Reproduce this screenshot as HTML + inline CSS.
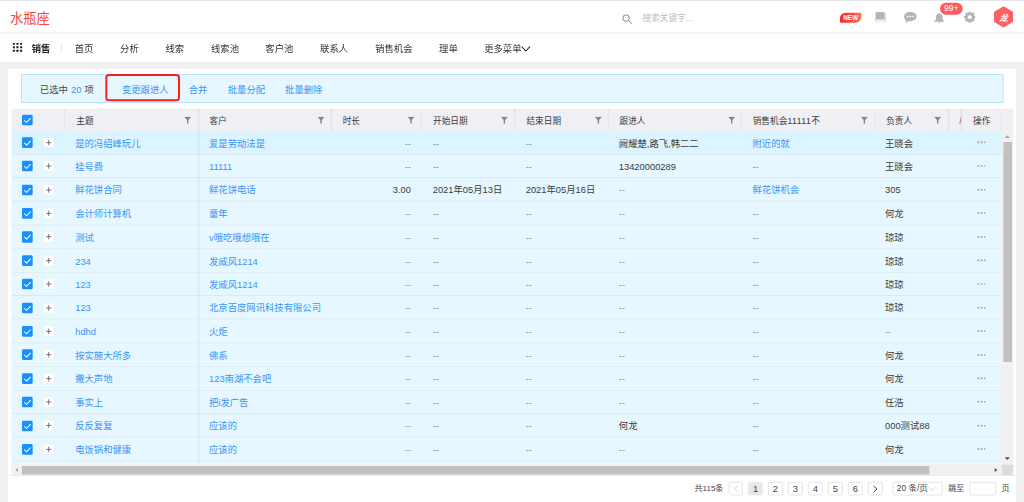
<!DOCTYPE html>
<html lang="zh-CN"><head><meta charset="utf-8"><title>水瓶座</title>
<style>
*{box-sizing:border-box;margin:0;padding:0}
html,body{width:1024px;height:502px;overflow:hidden;margin:0}#s{position:absolute;left:0;top:0;width:1536px;height:753px;transform:scale(.666667);transform-origin:0 0}
body{position:relative;background:#f0f0f0;font-family:"Liberation Sans","Noto Sans CJK SC",sans-serif;font-size:14px;color:#333;-webkit-font-smoothing:antialiased}
i{font-style:normal;display:block}
.abs{position:absolute}
/* top header */
.hd{position:absolute;left:0;top:0;width:1536px;height:50.25px;background:#fff;border-bottom:1.5px solid #ececec;box-shadow:inset 0 -4.5px 4.5px -3px rgba(0,0,0,.035),inset 0 1.5px 0 #e6e7ea}
.logo{position:absolute;left:15px;top:13.5px;font-size:19.95px;line-height:27px;color:#f4483c;letter-spacing:0;white-space:nowrap}
.srch{position:absolute;left:933px;top:21px;width:15.3px;height:15.3px}
.ph{position:absolute;left:963.75px;top:17.55px;font-size:13px;line-height:18px;color:#bdbdbd;white-space:nowrap}
.new{position:absolute;left:1260px;top:19.2px;width:31.8px;height:15px;border-radius:8.25px 1.5px 8.25px 1.5px;background:linear-gradient(100deg,#f5222d 0%,#ff4a3d 55%,#ff7a5c 100%);color:#fff;font-size:9.45px;line-height:15px;font-weight:bold;text-align:center;letter-spacing:0}
.new i{font-style:italic;display:inline}
.ic{position:absolute}
.bdg{position:absolute;left:1409.7px;top:4.05px;width:34.8px;height:17.7px;border-radius:9px;background:#fd5c5f;color:#fff;font-size:12.9px;line-height:17.7px;text-align:center;white-space:nowrap}
.ava{position:absolute;left:1491px;top:9px;width:28.8px;height:32.7px}
/* nav */
.nav{position:absolute;left:0;top:51px;width:1536px;height:42px;background:#fff}
.nav span{position:absolute;top:12px;line-height:21px;font-size:14px;color:#333;white-space:nowrap}
.nav .cur{font-weight:bold;color:#222}
.grid{position:absolute;left:19.2px;top:13.05px;width:14.4px;height:13.8px}
.vsep{position:absolute;left:91.5px;top:13.05px;width:1.5px;height:13.8px;background:#dcdcdc}
/* card */
.card{position:absolute;left:12px;top:102.9px;width:1512px;height:660px;background:#fff}
.bl{position:absolute;left:12px;top:712.95px;width:1512px;height:1px;background:#e8e8e8}
.alert{position:absolute;left:31.5px;top:111.3px;width:1473px;height:42.9px;background:#e6f7ff;border:1px solid #9fd9fd}
.alert span{position:absolute;top:11.7px;line-height:21px;white-space:nowrap;color:#454545;word-spacing:0.75px}
.alert .lk{color:#3896f8}
.redbox{position:absolute;left:158.4px;top:111.3px;width:111.3px;height:40.5px;border:3.15px solid #ff1c1c;border-radius:5.25px}
/* table */
.thead{position:absolute;left:16.5px;top:163.2px;width:1503px;height:33.15px;background:#f0f0f4}
.thead span{position:absolute;top:8.85px;line-height:19.5px;font-size:13px;color:#3a3a3a;font-weight:400;white-space:nowrap}
.thead u{position:absolute;top:0;margin-left:-0.6px;width:1.5px;height:33.15px;background:#e0e0e5;text-decoration:none}
.thead svg.f{position:absolute;top:11.7px;width:11.1px;height:11.1px;margin-left:-0.75px}
.tbody{position:absolute;left:16.5px;top:196.35px;width:1486.5px;height:500.7px;overflow:hidden;background:#e6f7ff}
.tr{position:absolute;left:0;width:1486.5px;height:35.38px;border-bottom:1.5px solid #d8e3ea;background:#e6f7ff}
.tr.hov{background:#dcf4ff}
.tbody:after{content:"";position:absolute;left:280.95px;top:0;width:1.5px;height:100%;background:rgba(120,160,190,.13)}
.cb{position:absolute;left:16.5px;top:9.6px;width:16.05px;height:16.05px;border-radius:2.1px;background:#1890ff}
.cb svg{display:block;width:100%;height:100%;fill:none;stroke:#fff;stroke-width:1.5;stroke-linecap:round;stroke-linejoin:round}
.ex{position:absolute;left:49.8px;top:10.5px;width:14.1px;height:14.1px;background:#fff}
.ex svg{display:block;width:100%;height:100%}
.c{position:absolute;top:8.25px;line-height:21px;white-space:nowrap;color:#3c3c3c}
.lk{color:#3896f8}
.m{color:#8a8f94}
.c1{left:96.3px}.c2{left:297px}.c3{right:886.5px;text-align:right}.c4{left:632.55px}.c5{left:772.05px}.c6{left:911.7px}.c7{left:1112.25px}.c8{left:1311px}
.c9{left:1448.85px;top:15.9px;width:15px;height:3px}
.c9 b{position:absolute;top:0;width:2.85px;height:2.85px;border-radius:50%;background:#a6a6a6}
.c9 b:nth-child(1){left:0.6px}.c9 b:nth-child(2){left:5.4px}.c9 b:nth-child(3){left:10.2px}
/* scrollbars */
.vs{position:absolute;left:1503px;top:196.35px;width:16.5px;height:500.7px;background:#f1f1f1}
.vs .th{position:absolute;left:1.8px;top:17.1px;width:12.9px;height:329.4px;background:#c1c1c1}
.hs{position:absolute;left:16.5px;top:697.05px;width:1486.5px;height:15.9px;background:#f1f1f1}
.hs .th{position:absolute;left:16.95px;top:2.1px;width:1360.8px;height:12.45px;background:#c1c1c1}
.cor{position:absolute;left:1503px;top:697.05px;width:16.5px;height:15.9px;background:#dcdcdc}
.arr{position:absolute;width:0;height:0;border:0 solid transparent}
/* pagination */
.pg{position:absolute;top:724.05px;height:19.95px;font-size:12px;line-height:19.95px;color:#444;white-space:nowrap}
.pb{position:absolute;top:723.45px;width:21.75px;height:19.8px;border:1.05px solid #d9d9d9;border-radius:2.4px;background:#fff;font-size:14px;line-height:18.9px;text-align:center;color:#444}
.pb.on{background:#e8e8e8;border-color:#e8e8e8}

</style></head>
<body>
<div id="s">
<div class="hd">
<div class="logo">水瓶座</div>
<svg class="srch" viewBox="0 0 11 11"><circle cx="4.4" cy="4.4" r="3.5" fill="none" stroke="#7a7a7a" stroke-width=".95"/><path d="M7 7l3.3 3.3" stroke="#7a7a7a" stroke-width="1.05" stroke-linecap="round"/></svg>
<div class="ph">搜索关键字...</div>
<div class="new">NEW</div>
<svg class="ic" style="left:1313.4px;top:17.85px;width:15.9px;height:16.2px" viewBox="0 0 106 108"><path d="M16 4h78c7 0 12 5 12 12v76c0 7-5 12-12 12H16z" fill="#d6d8df"/><path d="M14 0h66c6 0 10 4 10 10v64H0V14C0 6 6 0 14 0z" fill="#b1b4bd"/><path d="M0 70h12v36C5 104 0 98 0 90z" fill="#b1b4bd"/><path d="M22 76h64c4 0 7 3 7 7v10c0 4-3 7-7 7H22c-7 0-12-5-12-12s5-12 12-12z" fill="#fff"/><path d="M26 85h54v6H26z" fill="#b1b4bd"/></svg>
<svg class="ic" style="left:1355.7px;top:17.55px;width:19.2px;height:16.8px" viewBox="0 0 128 112"><path d="M64 0c35 0 64 20 64 46S99 92 64 92c-8 0-16-1-23-3-6 8-16 17-26 22 3-8 4-19 3-28C7 75 0 61 0 46 0 20 29 0 64 0z" fill="#b1b4bd"/><rect x="27" y="38" width="16" height="14" rx="3" fill="#fff"/><rect x="56" y="38" width="16" height="14" rx="3" fill="#fff"/><rect x="85" y="38" width="16" height="14" rx="3" fill="#fff"/></svg>
<svg class="ic" style="left:1401px;top:18.6px;width:15.9px;height:16.2px" viewBox="0 0 106 108"><path d="M53 0c5 0 8 3 8 8v3c16 4 26 18 26 36v20c0 8 8 14 19 19v4H0v-4c11-5 19-11 19-19V47c0-18 10-32 26-36V8c0-5 3-8 8-8z" fill="#b1b4bd"/><path d="M41 96h24c0 7-5 12-12 12s-12-5-12-12z" fill="#b1b4bd"/></svg>
<div class="bdg">99+</div>
<svg class="ic" style="left:1445.7px;top:17.4px;width:17.4px;height:17.4px" viewBox="-58 -58 116 116"><g fill="#b1b4bd"><circle r="45"/><rect x="-14" y="-57" width="28" height="28" rx="6" transform="rotate(0)"/><rect x="-14" y="-57" width="28" height="28" rx="6" transform="rotate(45)"/><rect x="-14" y="-57" width="28" height="28" rx="6" transform="rotate(90)"/><rect x="-14" y="-57" width="28" height="28" rx="6" transform="rotate(135)"/><rect x="-14" y="-57" width="28" height="28" rx="6" transform="rotate(180)"/><rect x="-14" y="-57" width="28" height="28" rx="6" transform="rotate(225)"/><rect x="-14" y="-57" width="28" height="28" rx="6" transform="rotate(270)"/><rect x="-14" y="-57" width="28" height="28" rx="6" transform="rotate(315)"/></g><circle r="19" fill="#fff"/></svg>
<svg class="ava" viewBox="0 0 192 218"><path d="M96 3L186 55c4 2 6 6 6 10v88c0 4-2 8-6 10L96 215 6 163c-4-2-6-6-6-10V65c0-4 2-8 6-10z" fill="#fd6164"/><text x="96" y="150" font-family="Liberation Sans,Noto Sans CJK SC,sans-serif" font-size="86" font-weight="bold" font-style="italic" fill="#fff" text-anchor="middle">龙</text></svg>
</div>
<div class="nav">
<svg class="grid" viewBox="0 0 96 92"><g fill="#222"><rect x="0" y="0" width="22" height="20" rx="3"/><rect x="37" y="0" width="22" height="20" rx="3"/><rect x="74" y="0" width="22" height="20" rx="3"/><rect x="0" y="36" width="22" height="20" rx="3"/><rect x="37" y="36" width="22" height="20" rx="3"/><rect x="74" y="36" width="22" height="20" rx="3"/><rect x="0" y="72" width="22" height="20" rx="3"/><rect x="37" y="72" width="22" height="20" rx="3"/><rect x="74" y="72" width="22" height="20" rx="3"/></g></svg>
<span class="cur" style="left:47.7px">销售</span>
<i class="vsep"></i>
<span style="left:112.05px">首页</span>
<span style="left:180.15px">分析</span>
<span style="left:248.25px">线索</span>
<span style="left:316.5px">线索池</span>
<span style="left:397.95px">客户池</span>
<span style="left:480.15px">联系人</span>
<span style="left:562.8px">销售机会</span>
<span style="left:658.65px">理单</span>
<span style="left:726.3px">更多菜单</span>
<svg class="abs" style="left:782.4px;top:17.7px;width:13.5px;height:9px" viewBox="0 0 90 60"><path d="M6 8l39 42L84 8" fill="none" stroke="#222" stroke-width="10" stroke-linecap="round" stroke-linejoin="round"/></svg>
</div>
<div class="card"></div>
<div class="alert">
<span style="left:27.3px">已选中 <span class="lk" style="position:static">20</span> 项</span>
<span class="lk" style="left:150.45px">变更跟进人</span>
<span class="lk" style="left:250.65px">合并</span>
<span class="lk" style="left:309.15px">批量分配</span>
<span class="lk" style="left:395.1px">批量删除</span>
</div>
<div class="redbox"></div>
<div class="thead">
<i class="cb" style="top:8.4px"><svg viewBox="0 0 16 16"><path d="M3.9 8.8l3 2.9 5.6-6.1"/></svg></i>
<u style="left:79.95px"></u><u style="left:281.4px"></u><u style="left:480.45px"></u><u style="left:615.6px"></u><u style="left:755.1px"></u><u style="left:895.8px"></u><u style="left:1095.6px"></u><u style="left:1295.85px"></u><u style="left:1406.1px"></u><u style="left:1425.3px"></u><u style="left:1485px"></u>
<span style="left:97.95px">主题</span>
<span style="left:297.6px">客户</span>
<span style="left:497.55px">时长</span>
<span style="left:633px">开始日期</span>
<span style="left:773.1px">结束日期</span>
<span style="left:912.75px">跟进人</span>
<span style="left:1112.55px">销售机会<b style="font-weight:inherit;letter-spacing:0.68px">11111</b>不</span>
<span style="left:1312.8px">负责人</span>
<span style="left:1422.3px;width:3px;overflow:hidden;color:#555">/</span>
<span style="left:1443px">操作</span>
<svg class="f" style="left:260.25px" viewBox="0 0 69 74"><path d="M2 0h65c2 0 3 2 1 4L42 34v34c0 3-2 5-4 4l-9-5c-1-1-2-2-2-4V34L1 4C-1 2 0 0 2 0z" fill="#858585"/></svg><svg class="f" style="left:460.5px" viewBox="0 0 69 74"><path d="M2 0h65c2 0 3 2 1 4L42 34v34c0 3-2 5-4 4l-9-5c-1-1-2-2-2-4V34L1 4C-1 2 0 0 2 0z" fill="#858585"/></svg><svg class="f" style="left:595.5px" viewBox="0 0 69 74"><path d="M2 0h65c2 0 3 2 1 4L42 34v34c0 3-2 5-4 4l-9-5c-1-1-2-2-2-4V34L1 4C-1 2 0 0 2 0z" fill="#858585"/></svg><svg class="f" style="left:735px" viewBox="0 0 69 74"><path d="M2 0h65c2 0 3 2 1 4L42 34v34c0 3-2 5-4 4l-9-5c-1-1-2-2-2-4V34L1 4C-1 2 0 0 2 0z" fill="#858585"/></svg><svg class="f" style="left:876px" viewBox="0 0 69 74"><path d="M2 0h65c2 0 3 2 1 4L42 34v34c0 3-2 5-4 4l-9-5c-1-1-2-2-2-4V34L1 4C-1 2 0 0 2 0z" fill="#858585"/></svg><svg class="f" style="left:1075.95px" viewBox="0 0 69 74"><path d="M2 0h65c2 0 3 2 1 4L42 34v34c0 3-2 5-4 4l-9-5c-1-1-2-2-2-4V34L1 4C-1 2 0 0 2 0z" fill="#858585"/></svg><svg class="f" style="left:1275.45px" viewBox="0 0 69 74"><path d="M2 0h65c2 0 3 2 1 4L42 34v34c0 3-2 5-4 4l-9-5c-1-1-2-2-2-4V34L1 4C-1 2 0 0 2 0z" fill="#858585"/></svg><svg class="f" style="left:1385.7px" viewBox="0 0 69 74"><path d="M2 0h65c2 0 3 2 1 4L42 34v34c0 3-2 5-4 4l-9-5c-1-1-2-2-2-4V34L1 4C-1 2 0 0 2 0z" fill="#858585"/></svg>
</div>
<div class="tbody">
<div class="tr hov" style="top:0px"><i class="cb"><svg viewBox="0 0 16 16"><path d="M3.9 8.8l3 2.9 5.6-6.1"/></svg></i><i class="ex"><svg viewBox="0 0 14 14"><path d="M3 7h8M7 3v8" stroke="#555" stroke-width="1.15" fill="none"/></svg></i><span class="c c1 lk">是的冯绍峰玩儿</span><span class="c c2 lk">爱是劳动法是</span><span class="c c3 m">--</span><span class="c c4 m">--</span><span class="c c5 m">--</span><span class="c c6">阙耀楚,路飞,韩二二</span><span class="c c7 lk">附近的就</span><span class="c c8">王晓会</span><span class="c c9"><b></b><b></b><b></b></span></div>
<div class="tr" style="top:35.38px"><i class="cb"><svg viewBox="0 0 16 16"><path d="M3.9 8.8l3 2.9 5.6-6.1"/></svg></i><i class="ex"><svg viewBox="0 0 14 14"><path d="M3 7h8M7 3v8" stroke="#555" stroke-width="1.15" fill="none"/></svg></i><span class="c c1 lk">挂号费</span><span class="c c2 lk">11111</span><span class="c c3 m">--</span><span class="c c4 m">--</span><span class="c c5 m">--</span><span class="c c6">13420000289</span><span class="c c7 m">--</span><span class="c c8">王晓会</span><span class="c c9"><b></b><b></b><b></b></span></div>
<div class="tr" style="top:70.77px"><i class="cb"><svg viewBox="0 0 16 16"><path d="M3.9 8.8l3 2.9 5.6-6.1"/></svg></i><i class="ex"><svg viewBox="0 0 14 14"><path d="M3 7h8M7 3v8" stroke="#555" stroke-width="1.15" fill="none"/></svg></i><span class="c c1 lk">鲜花饼合同</span><span class="c c2 lk">鲜花饼电话</span><span class="c c3">3.00</span><span class="c c4">2021年05月13日</span><span class="c c5">2021年05月16日</span><span class="c c6 m">--</span><span class="c c7 lk">鲜花饼机会</span><span class="c c8">305</span><span class="c c9"><b></b><b></b><b></b></span></div>
<div class="tr" style="top:106.16px"><i class="cb"><svg viewBox="0 0 16 16"><path d="M3.9 8.8l3 2.9 5.6-6.1"/></svg></i><i class="ex"><svg viewBox="0 0 14 14"><path d="M3 7h8M7 3v8" stroke="#555" stroke-width="1.15" fill="none"/></svg></i><span class="c c1 lk">会计师计算机</span><span class="c c2 lk">童年</span><span class="c c3 m">--</span><span class="c c4 m">--</span><span class="c c5 m">--</span><span class="c c6 m">--</span><span class="c c7 m">--</span><span class="c c8">何龙</span><span class="c c9"><b></b><b></b><b></b></span></div>
<div class="tr" style="top:141.54px"><i class="cb"><svg viewBox="0 0 16 16"><path d="M3.9 8.8l3 2.9 5.6-6.1"/></svg></i><i class="ex"><svg viewBox="0 0 14 14"><path d="M3 7h8M7 3v8" stroke="#555" stroke-width="1.15" fill="none"/></svg></i><span class="c c1 lk">测试</span><span class="c c2 lk">v哦吃哦想哦在</span><span class="c c3 m">--</span><span class="c c4 m">--</span><span class="c c5 m">--</span><span class="c c6 m">--</span><span class="c c7 m">--</span><span class="c c8">琼琼</span><span class="c c9"><b></b><b></b><b></b></span></div>
<div class="tr" style="top:176.93px"><i class="cb"><svg viewBox="0 0 16 16"><path d="M3.9 8.8l3 2.9 5.6-6.1"/></svg></i><i class="ex"><svg viewBox="0 0 14 14"><path d="M3 7h8M7 3v8" stroke="#555" stroke-width="1.15" fill="none"/></svg></i><span class="c c1 lk">234</span><span class="c c2 lk">发威风1214</span><span class="c c3 m">--</span><span class="c c4 m">--</span><span class="c c5 m">--</span><span class="c c6 m">--</span><span class="c c7 m">--</span><span class="c c8">琼琼</span><span class="c c9"><b></b><b></b><b></b></span></div>
<div class="tr" style="top:212.31px"><i class="cb"><svg viewBox="0 0 16 16"><path d="M3.9 8.8l3 2.9 5.6-6.1"/></svg></i><i class="ex"><svg viewBox="0 0 14 14"><path d="M3 7h8M7 3v8" stroke="#555" stroke-width="1.15" fill="none"/></svg></i><span class="c c1 lk">123</span><span class="c c2 lk">发威风1214</span><span class="c c3 m">--</span><span class="c c4 m">--</span><span class="c c5 m">--</span><span class="c c6 m">--</span><span class="c c7 m">--</span><span class="c c8">琼琼</span><span class="c c9"><b></b><b></b><b></b></span></div>
<div class="tr" style="top:247.69px"><i class="cb"><svg viewBox="0 0 16 16"><path d="M3.9 8.8l3 2.9 5.6-6.1"/></svg></i><i class="ex"><svg viewBox="0 0 14 14"><path d="M3 7h8M7 3v8" stroke="#555" stroke-width="1.15" fill="none"/></svg></i><span class="c c1 lk">123</span><span class="c c2 lk">北京百度网讯科技有限公司</span><span class="c c3 m">--</span><span class="c c4 m">--</span><span class="c c5 m">--</span><span class="c c6 m">--</span><span class="c c7 m">--</span><span class="c c8">琼琼</span><span class="c c9"><b></b><b></b><b></b></span></div>
<div class="tr" style="top:283.08px"><i class="cb"><svg viewBox="0 0 16 16"><path d="M3.9 8.8l3 2.9 5.6-6.1"/></svg></i><i class="ex"><svg viewBox="0 0 14 14"><path d="M3 7h8M7 3v8" stroke="#555" stroke-width="1.15" fill="none"/></svg></i><span class="c c1 lk">hdhd</span><span class="c c2 lk">火炬</span><span class="c c3 m">--</span><span class="c c4 m">--</span><span class="c c5 m">--</span><span class="c c6 m">--</span><span class="c c7 m">--</span><span class="c c8 m">--</span><span class="c c9"><b></b><b></b><b></b></span></div>
<div class="tr" style="top:318.47px"><i class="cb"><svg viewBox="0 0 16 16"><path d="M3.9 8.8l3 2.9 5.6-6.1"/></svg></i><i class="ex"><svg viewBox="0 0 14 14"><path d="M3 7h8M7 3v8" stroke="#555" stroke-width="1.15" fill="none"/></svg></i><span class="c c1 lk">按实施大所多</span><span class="c c2 lk">佛系</span><span class="c c3 m">--</span><span class="c c4 m">--</span><span class="c c5 m">--</span><span class="c c6 m">--</span><span class="c c7 m">--</span><span class="c c8">何龙</span><span class="c c9"><b></b><b></b><b></b></span></div>
<div class="tr" style="top:353.85px"><i class="cb"><svg viewBox="0 0 16 16"><path d="M3.9 8.8l3 2.9 5.6-6.1"/></svg></i><i class="ex"><svg viewBox="0 0 14 14"><path d="M3 7h8M7 3v8" stroke="#555" stroke-width="1.15" fill="none"/></svg></i><span class="c c1 lk">撒大声地</span><span class="c c2 lk">123南湖不会吧</span><span class="c c3 m">--</span><span class="c c4 m">--</span><span class="c c5 m">--</span><span class="c c6 m">--</span><span class="c c7 m">--</span><span class="c c8">何龙</span><span class="c c9"><b></b><b></b><b></b></span></div>
<div class="tr" style="top:389.24px"><i class="cb"><svg viewBox="0 0 16 16"><path d="M3.9 8.8l3 2.9 5.6-6.1"/></svg></i><i class="ex"><svg viewBox="0 0 14 14"><path d="M3 7h8M7 3v8" stroke="#555" stroke-width="1.15" fill="none"/></svg></i><span class="c c1 lk">事实上</span><span class="c c2 lk">把i发广告</span><span class="c c3 m">--</span><span class="c c4 m">--</span><span class="c c5 m">--</span><span class="c c6 m">--</span><span class="c c7 m">--</span><span class="c c8">任浩</span><span class="c c9"><b></b><b></b><b></b></span></div>
<div class="tr" style="top:424.62px"><i class="cb"><svg viewBox="0 0 16 16"><path d="M3.9 8.8l3 2.9 5.6-6.1"/></svg></i><i class="ex"><svg viewBox="0 0 14 14"><path d="M3 7h8M7 3v8" stroke="#555" stroke-width="1.15" fill="none"/></svg></i><span class="c c1 lk">反反复复</span><span class="c c2 lk">应该的</span><span class="c c3 m">--</span><span class="c c4 m">--</span><span class="c c5 m">--</span><span class="c c6">何龙</span><span class="c c7 m">--</span><span class="c c8">000测试88</span><span class="c c9"><b></b><b></b><b></b></span></div>
<div class="tr" style="top:460px"><i class="cb"><svg viewBox="0 0 16 16"><path d="M3.9 8.8l3 2.9 5.6-6.1"/></svg></i><i class="ex"><svg viewBox="0 0 14 14"><path d="M3 7h8M7 3v8" stroke="#555" stroke-width="1.15" fill="none"/></svg></i><span class="c c1 lk">电饭锅和健康</span><span class="c c2 lk">应该的</span><span class="c c3 m">--</span><span class="c c4 m">--</span><span class="c c5 m">--</span><span class="c c6 m">--</span><span class="c c7 m">--</span><span class="c c8">何龙</span><span class="c c9"><b></b><b></b><b></b></span></div>
<div class="tr" style="top:495.39px"></div>
</div>
<div class="vs"><i class="arr" style="left:3.75px;top:6.6px;border-width:0 4.5px 4.95px 4.5px;border-bottom-color:#a3a3a3"></i><i class="th"></i><i class="arr" style="left:4.05px;top:489.3px;border-width:4.5px 4.05px 0 4.05px;border-top-color:#505050"></i></div>
<div class="hs"><i class="arr" style="left:6.6px;top:4.5px;border-width:3.53px 4.35px 3.53px 0;border-right-color:#a3a3a3"></i><i class="th"></i><i class="arr" style="left:1475.1px;top:4.65px;border-width:3.53px 0 3.53px 4.5px;border-left-color:#505050"></i></div>
<div class="cor"></div>
<div class="bl"></div>
<div class="pg" style="left:1041.9px">共115条</div>
<div class="pb" style="left:1092.6px"><svg viewBox="0 0 50 80" style="width:7.5px;height:11.1px;margin-top:3.9px"><path d="M44 6L8 40l36 34" fill="none" stroke="#bdbdbd" stroke-width="7"/></svg></div>
<div class="pb on" style="left:1122.45px">1</div>
<div class="pb" style="left:1152.3px">2</div>
<div class="pb" style="left:1182.3px">3</div>
<div class="pb" style="left:1212.3px">4</div>
<div class="pb" style="left:1242.15px">5</div>
<div class="pb" style="left:1272.15px">6</div>
<div class="pb" style="left:1302.15px"><svg viewBox="0 0 50 80" style="width:8.1px;height:11.4px;margin-top:3.75px"><path d="M6 6l36 34L6 74" fill="none" stroke="#3c3c3c" stroke-width="10.5"/></svg></div>
<div class="pb" style="left:1339.35px;width:74.7px;text-align:left;padding-left:4.95px;font-size:12.6px">20 条/页<svg viewBox="0 0 80 50" style="position:absolute;left:52.05px;top:5.85px;width:11.1px;height:7.05px"><path d="M5 5l35 38L75 5" fill="none" stroke="#bcbcbc" stroke-width="7"/></svg></div>
<div class="pg" style="left:1422.3px">跳至</div>
<div class="pb" style="left:1453.95px;width:40.2px"></div>
<div class="pg" style="left:1502.4px">页</div>
</div>
</body></html>
